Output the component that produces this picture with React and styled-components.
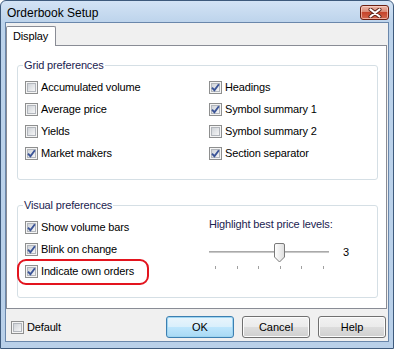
import React from 'react';
import styled, { createGlobalStyle } from 'styled-components';

const GlobalStyle = createGlobalStyle`
    html, body {
        margin : 0;
        padding : 0;
        background : #ffffff;
    }
    body {
        font-family : "Liberation Sans", Arial, sans-serif;
        font-size : 11px;
        letter-spacing : -0.15px;
        color : #000;
    }
`;

const Check = ({ checked, label }) => (
    <CheckRow>
        <Box>
            <BoxInner>
                {checked && (
                    <svg width="9" height="9" viewBox="0 0 9 9">
                        <path d="M1 4.6 L3.4 7.2 L7.9 1.2" fill="none" stroke="#3b5497" strokeWidth="1.9" />
                    </svg>
                )}
            </BoxInner>
        </Box>
        <span>{label}</span>
    </CheckRow>
);

const Slider = ({ value, max }) => {
    const step = 21.6;
    return (
        <SliderLine>
            <SliderBox>
                <Track />
                <Thumb style={{ left: 6 + value * step - 6 }} viewBox="0 0 11 20" width="11" height="20">
                    <defs>
                        <linearGradient id="thumbFill" x1="0" y1="0" x2="1" y2="0">
                            <stop offset="0" stopColor="#ffffff" />
                            <stop offset="1" stopColor="#dedede" />
                        </linearGradient>
                    </defs>
                    <path d="M2 0.5 H9 Q10.5 0.5 10.5 2 V14 L5.5 19 L0.5 14 V2 Q0.5 0.5 2 0.5 Z" fill="url(#thumbFill)" stroke="#7a7a7a" />
                </Thumb>
                <Ticks>
                    {Array.from({ length: max + 1 }).map((_, i) => <Tick key={i} />)}
                </Ticks>
            </SliderBox>
            <SliderValue>{value}</SliderValue>
        </SliderLine>
    );
};

const App = () => {
    return (
        <Window>
            <GlobalStyle />
            <TitleBar>
                <Title>Orderbook Setup</Title>
                <CloseButton>
                    <svg width="14" height="10" viewBox="0 0 14 10">
                        <path d="M2.5 1.5 L11.5 8.5 M11.5 1.5 L2.5 8.5" stroke="#5a2318" strokeWidth="4" strokeLinecap="round" />
                        <path d="M2.5 1.5 L11.5 8.5 M11.5 1.5 L2.5 8.5" stroke="#ffffff" strokeWidth="2.2" strokeLinecap="round" />
                    </svg>
                </CloseButton>
            </TitleBar>
            <Client>
                <Tabs>
                    <Tab>Display</Tab>
                </Tabs>
                <Panel>
                    <Group>
                        <Legend>Grid preferences</Legend>
                        <GroupGrid>
                            <Column>
                                <Check label="Accumulated volume" />
                                <Check label="Average price" />
                                <Check label="Yields" />
                                <Check checked label="Market makers" />
                            </Column>
                            <Column>
                                <Check checked label="Headings" />
                                <Check checked label="Symbol summary 1" />
                                <Check label="Symbol summary 2" />
                                <Check checked label="Section separator" />
                            </Column>
                        </GroupGrid>
                    </Group>
                    <Group $visual>
                        <Legend>Visual preferences</Legend>
                        <GroupGrid>
                            <Column>
                                <Check checked label="Show volume bars" />
                                <Check checked label="Blink on change" />
                                <Marked>
                                    <Check checked label="Indicate own orders" />
                                </Marked>
                            </Column>
                            <Column>
                                <SliderLabel>Highlight best price levels:</SliderLabel>
                                <Slider value={3} max={5} />
                            </Column>
                        </GroupGrid>
                    </Group>
                </Panel>
                <Footer>
                    <Check label="Default" />
                    <Buttons>
                        <Button $primary>OK</Button>
                        <Button>Cancel</Button>
                        <Button>Help</Button>
                    </Buttons>
                </Footer>
            </Client>
        </Window>
    );
};

const Window = styled.div`
    width : 394px;
    height : 349px;
    box-sizing : border-box;
    display : flex;
    flex-direction : column;
    border : 1px solid #3e5a7c;
    border-radius : 6px 6px 0 0;
    background : linear-gradient(#d3e3f5, #bcd3eb 22px, #b9d0e9);
    padding : 0 4px 6px 4px;
`;

const TitleBar = styled.div`
    height : 21px;
    display : flex;
    justify-content : space-between;
    align-items : flex-start;
`;

const Title = styled.div`
    font-size : 12px;
    letter-spacing : 0;
    line-height : 16px;
    margin : 4px 0 0 2px;
    color : #000;
`;

const CloseButton = styled.div`
    width : 29px;
    height : 15px;
    margin-top : 4px;
    box-sizing : border-box;
    border : 1px solid #6b1f12;
    border-radius : 3px;
    background : linear-gradient(#ecb6a9, #da8a77 45%, #c6452c 50%, #d4674f);
    box-shadow : inset 0 0 0 1px rgba(255, 220, 210, 0.6);
    display : flex;
    align-items : center;
    justify-content : center;
`;

const Client = styled.div`
    flex : 1;
    display : flex;
    flex-direction : column;
    border : 1px solid #6a87ab;
    background : #f0f0f0;
    padding : 3px 1px 0 0;
`;

const Tabs = styled.div`
    display : flex;
    position : relative;
    z-index : 1;
    margin-bottom : -1px;
`;

const Tab = styled.div`
    width : 42px;
    height : 19px;
    line-height : 19px;
    padding : 0 0 0 6px;
    border : 1px solid #898c95;
    border-bottom : none;
    border-radius : 2px 2px 0 0;
    background : #ffffff;
`;

const Panel = styled.div`
    height : 264px;
    box-sizing : border-box;
    border : 1px solid #898c95;
    background : #ffffff;
    padding : 11px 8px 0 10px;
    display : flex;
    flex-direction : column;
    gap : 17px;
`;

const Group = styled.fieldset`
    margin : 0;
    border : 1px solid #d5dfe5;
    border-radius : 3px;
    padding : 0 7px ${({ $visual }) => ($visual ? '15px' : '15px')} 7px;
    min-width : 0;
`;

const Legend = styled.legend`
    margin-left : -2px;
    padding : 0 1px;
    line-height : 16px;
    color : #1b2350;
`;

const GroupGrid = styled.div`
    display : grid;
    grid-template-columns : 184px 1fr;
    margin-top : 3px;
`;

const Column = styled.div`
    display : flex;
    flex-direction : column;
`;

const CheckRow = styled.label`
    display : flex;
    align-items : center;
    height : 22px;
    gap : 3px;
    white-space : nowrap;
`;

const Box = styled.span`
    width : 13px;
    height : 13px;
    box-sizing : border-box;
    border : 1px solid #8e8f8f;
    background : #f4f4f4;
    padding : 1px;
    flex : none;
`;

const BoxInner = styled.span`
    display : flex;
    align-items : center;
    justify-content : center;
    width : 9px;
    height : 9px;
    box-sizing : border-box;
    border : 1px solid #b2b6bc;
    background : linear-gradient(135deg, #cfd3d8, #f5f5f6);
    svg {
        flex : none;
        margin : -1px;
    }
`;

const Marked = styled.div`
    position : relative;
    &::after {
        content : "";
        position : absolute;
        left : -8px;
        top : -1px;
        bottom : -3px;
        width : 132px;
        box-sizing : border-box;
        border : 2px solid #e3141e;
        border-radius : 9px;
    }
`;

const SliderLabel = styled.div`
    height : 16px;
    line-height : 16px;
    color : #1b2350;
`;

const SliderLine = styled.div`
    display : flex;
    align-items : flex-start;
    margin-top : 11px;
`;

const SliderBox = styled.div`
    position : relative;
    width : 120px;
    height : 28px;
`;

const Track = styled.div`
    margin-top : 8px;
    height : 1px;
    background : #c8c8c8;
    border-top : 1px solid #a9a9a9;
    border-bottom : 1px solid #fdfdfd;
`;

const Thumb = styled.svg`
    position : absolute;
    top : 0;
`;

const Ticks = styled.div`
    display : flex;
    justify-content : space-between;
    padding : 0 5px 0 6px;
    margin-top : 12px;
`;

const Tick = styled.span`
    width : 1px;
    height : 3px;
    background : #a0a0a0;
`;

const SliderValue = styled.div`
    margin : 1px 0 0 14px;
    line-height : 16px;
`;

const Footer = styled.div`
    flex : 1;
    display : flex;
    align-items : flex-start;
    justify-content : space-between;
    padding : 7px 1px 0 5px;
`;

const Buttons = styled.div`
    display : flex;
    gap : 8px;
`;

const Button = styled.button`
    width : 68px;
    height : 22px;
    box-sizing : border-box;
    font-family : inherit;
    font-size : 11px;
    color : #000;
    border-radius : 3px;
    padding : 0;
    border : 1px solid ${({ $primary }) => ($primary ? '#3c7fb1' : '#707070')};
    background : ${({ $primary }) =>
        $primary
            ? 'linear-gradient(#e9f5fc, #d9effc 50%, #bee6fd 50%, #a8d9f4)'
            : 'linear-gradient(#f2f2f2, #ebebeb 50%, #dddddd 50%, #cfcfcf)'};
    box-shadow : inset 0 0 0 1px ${({ $primary }) => ($primary ? '#9fd5f1' : '#fcfcfc')};
`;

export default App
